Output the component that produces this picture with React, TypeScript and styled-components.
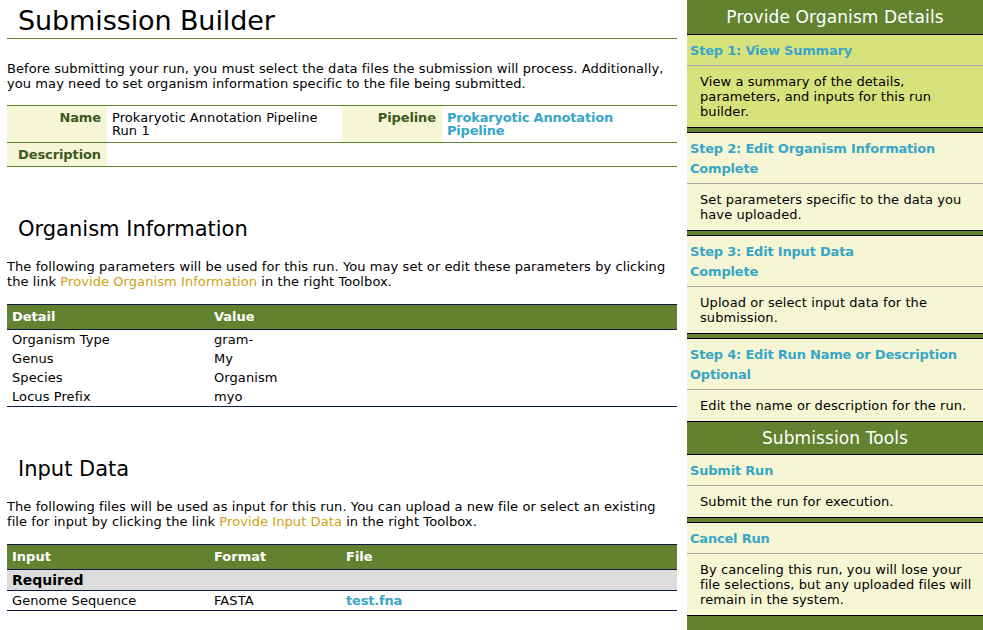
import React from "react";
import styled, { createGlobalStyle } from "styled-components";

const GREEN = "#62822f";
const NAVY = "#0c1a45";
const TEAL = "#38a6c7";
const GOLD = "#d2a010";
const PALE = "#f6f6d4";
const ACTIVE = "#d8e27c";

const Global = createGlobalStyle`
  html, body { margin: 0; padding: 0; background: #fff; }
  body {
    font-family: "DejaVu Sans", Verdana, sans-serif;
    font-size: 13px;
    letter-spacing: 0.08px;
    color: #000;
  }
`;

const Page = styled.div`
  display: flex;
  align-items: stretch;
  gap: 10px;
  padding-left: 7px;
  height: 630px;
  overflow: hidden;
`;

const Main = styled.main`
  width: 670px;
  flex: none;
`;

const Title = styled.h1`
  margin: 0;
  padding: 4px 11px 1px;
  font-size: 27px;
  font-weight: normal;
  letter-spacing: -0.1px;
  line-height: 33px;
  border-bottom: 1px solid ${GREEN};
`;

const SectionTitle = styled.h2`
  margin: 50px 0 0;
  padding-left: 11px;
  font-size: 21px;
  font-weight: normal;
  letter-spacing: 0;
  line-height: 25px;
`;

const Intro = styled.p<{ $top: number; $bottom: number }>`
  margin: ${(p) => p.$top}px 0 ${(p) => p.$bottom}px;
  line-height: 15px;
`;

const Link = styled.a<{ $bold?: boolean; $tone?: "gold" | "teal" }>`
  color: ${(p) => (p.$tone === "gold" ? GOLD : TEAL)};
  font-weight: ${(p) => (p.$bold ? "bold" : "normal")};
  letter-spacing: ${(p) => (p.$bold ? "-0.2px" : "0.08px")};
  text-decoration: none;
`;

const Summary = styled.table`
  width: 100%;
  table-layout: fixed;
  border-collapse: collapse;
  border-top: 1px solid ${GREEN};
  tr { border-bottom: 1px solid ${GREEN}; }
`;

const SumLabel = styled.th`
  background: #f6f6d6;
  color: #3b5a1c;
  font-weight: bold;
  letter-spacing: -0.1px;
  text-align: right;
  vertical-align: top;
  padding: 5px 6px 5px 5px;
  line-height: 13px;
`;

const SumValue = styled.td`
  vertical-align: top;
  padding: 5px 5px;
  line-height: 13px;
`;

const Data = styled.table`
  width: 100%;
  table-layout: fixed;
  border-collapse: collapse;
  border-top: 1px solid ${NAVY};
  border-bottom: 1px solid ${NAVY};
`;

const HeadRow = styled.tr`
  background: ${GREEN};
  border-bottom: 1px solid ${NAVY};
`;

const HeadCell = styled.th`
  color: #fff;
  font-weight: bold;
  letter-spacing: 0;
  text-align: left;
  padding: 4px 5px;
  line-height: 16px;
`;

const GroupRow = styled.tr`
  background: #dcdcdc;
  border-bottom: 1px solid ${NAVY};
`;

const GroupCell = styled.td`
  font-weight: bold;
  font-size: 14px;
  letter-spacing: 0;
  padding: 2px 5px;
  line-height: 16px;
`;

const Cell = styled.td`
  padding: 2px 5px;
  line-height: 15px;
`;

const Sidebar = styled.aside`
  flex: 1;
  background: ${GREEN};
  display: flex;
  flex-direction: column;
`;

const ToolHeader = styled.div<{ $h: number }>`
  height: ${(p) => p.$h}px;
  line-height: ${(p) => p.$h}px;
  text-align: center;
  color: #fff;
  font-size: 17px;
  letter-spacing: 0.1px;
  border-bottom: 1px solid #000;
`;

const Panel = styled.div<{ $active?: boolean; $follows?: boolean }>`
  background: ${(p) => (p.$active ? ACTIVE : PALE)};
  border-bottom: 1px solid #000;
  ${(p) => (p.$follows ? `margin-top: 4px; border-top: 1px solid #000;` : "")}
`;

const PanelTitle = styled.div`
  padding: 6px 3px 4px;
  line-height: 20px;
  font-weight: bold;
  letter-spacing: -0.2px;
  color: ${TEAL};
  border-bottom: 1px solid #aaaaaa;
`;

const PanelText = styled.div`
  padding: 8px 8px 8px 13px;
  line-height: 15px;
`;

type Step = { title: string; sub?: string; text: string; active?: boolean };

const steps: Step[] = [
  {
    title: "Step 1: View Summary",
    text: "View a summary of the details, parameters, and inputs for this run builder.",
    active: true,
  },
  {
    title: "Step 2: Edit Organism Information",
    sub: "Complete",
    text: "Set parameters specific to the data you have uploaded.",
  },
  {
    title: "Step 3: Edit Input Data",
    sub: "Complete",
    text: "Upload or select input data for the submission.",
  },
  {
    title: "Step 4: Edit Run Name or Description",
    sub: "Optional",
    text: "Edit the name or description for the run.",
  },
];

const tools: Step[] = [
  { title: "Submit Run", text: "Submit the run for execution." },
  {
    title: "Cancel Run",
    text: "By canceling this run, you will lose your file selections, but any uploaded files will remain in the system.",
  },
];

const organism = [
  ["Organism Type", "gram-"],
  ["Genus", "My"],
  ["Species", "Organism"],
  ["Locus Prefix", "myo"],
];

function PanelList({ items }: { items: Step[] }) {
  return (
    <>
      {items.map((s, i) => (
        <Panel key={s.title} $active={s.active} $follows={i > 0}>
          <PanelTitle>
            {s.title}
            {s.sub && (
              <>
                <br />
                {s.sub}
              </>
            )}
          </PanelTitle>
          <PanelText>{s.text}</PanelText>
        </Panel>
      ))}
    </>
  );
}

export default function App() {
  return (
    <>
      <Global />
      <Page>
        <Main>
          <Title>Submission Builder</Title>
          <Intro $top={22} $bottom={14}>
            Before submitting your run, you must select the data files the submission will process. Additionally,
            you may need to set organism information specific to the file being submitted.
          </Intro>
          <Summary>
            <colgroup>
              <col style={{ width: 100 }} />
              <col style={{ width: 235 }} />
              <col style={{ width: 100 }} />
              <col style={{ width: 235 }} />
            </colgroup>
            <tbody>
              <tr>
                <SumLabel>Name</SumLabel>
                <SumValue>Prokaryotic Annotation Pipeline Run 1</SumValue>
                <SumLabel>Pipeline</SumLabel>
                <SumValue>
                  <Link $bold>Prokaryotic Annotation Pipeline</Link>
                </SumValue>
              </tr>
              <tr>
                <SumLabel>Description</SumLabel>
                <SumValue colSpan={3} />
              </tr>
            </tbody>
          </Summary>

          <SectionTitle>Organism Information</SectionTitle>
          <Intro $top={17} $bottom={15}>
            The following parameters will be used for this run. You may set or edit these parameters by clicking
            the link <Link $tone="gold">Provide Organism Information</Link> in the right Toolbox.
          </Intro>
          <Data>
            <colgroup>
              <col style={{ width: 202 }} />
              <col />
            </colgroup>
            <thead>
              <HeadRow>
                <HeadCell>Detail</HeadCell>
                <HeadCell>Value</HeadCell>
              </HeadRow>
            </thead>
            <tbody>
              {organism.map(([k, v]) => (
                <tr key={k}>
                  <Cell>{k}</Cell>
                  <Cell>{v}</Cell>
                </tr>
              ))}
            </tbody>
          </Data>

          <SectionTitle>Input Data</SectionTitle>
          <Intro $top={17} $bottom={15}>
            The following files will be used as input for this run. You can upload a new file or select an existing
            file for input by clicking the link <Link $tone="gold">Provide Input Data</Link> in the right Toolbox.
          </Intro>
          <Data>
            <colgroup>
              <col style={{ width: 202 }} />
              <col style={{ width: 132 }} />
              <col />
            </colgroup>
            <thead>
              <HeadRow>
                <HeadCell>Input</HeadCell>
                <HeadCell>Format</HeadCell>
                <HeadCell>File</HeadCell>
              </HeadRow>
            </thead>
            <tbody>
              <GroupRow>
                <GroupCell colSpan={3}>Required</GroupCell>
              </GroupRow>
              <tr>
                <Cell>Genome Sequence</Cell>
                <Cell>FASTA</Cell>
                <Cell>
                  <Link $bold>test.fna</Link>
                </Cell>
              </tr>
            </tbody>
          </Data>
        </Main>

        <Sidebar>
          <ToolHeader $h={34}>Provide Organism Details</ToolHeader>
          <PanelList items={steps} />
          <ToolHeader $h={32}>Submission Tools</ToolHeader>
          <PanelList items={tools} />
        </Sidebar>
      </Page>
    </>
  );
}
